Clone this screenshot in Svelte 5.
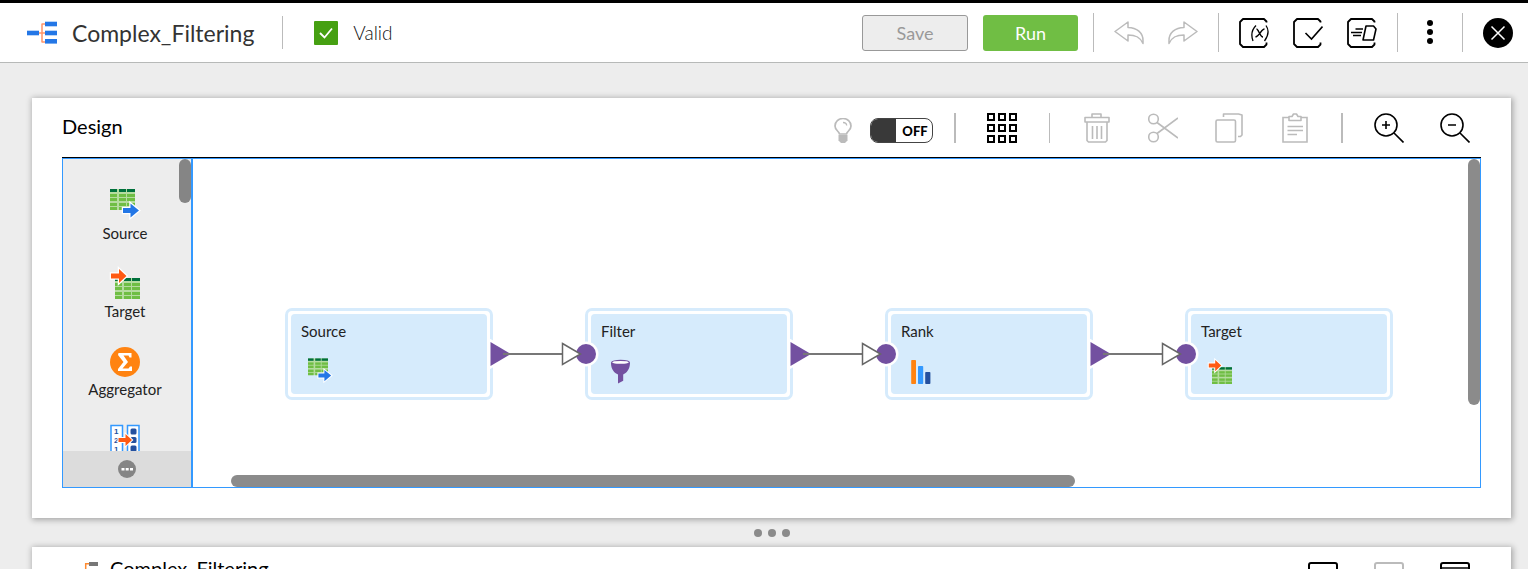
<script>
  const palette = [
    { name: 'Source', icon: 'source' },
    { name: 'Target', icon: 'target' },
    { name: 'Aggregator', icon: 'aggregator' },
    { name: '', icon: 'mapping' }
  ];
  const nodes = [
    { name: 'Source', icon: 'source', x: 92 },
    { name: 'Filter', icon: 'filter', x: 392 },
    { name: 'Rank', icon: 'rank', x: 692 },
    { name: 'Target', icon: 'target', x: 992 }
  ];
  const nodeY = 149;
  let hints = $state(false);
</script>

{#snippet table(x, y)}
  <g transform="translate({x} {y})">
    <rect width="25" height="21" fill="#b5dc9f" />
    {#each [0, 9, 17] as cx}
      <rect x={cx} y="0" width={cx === 17 ? 8 : 7} height="3" fill="#00703c" />
      {#each [5, 9, 14, 18] as ry}
        <rect x={cx} y={ry} width={cx === 17 ? 8 : 7} height="3" fill="#6fbe44" />
      {/each}
    {/each}
  </g>
{/snippet}

{#snippet glyph(kind)}
  {#if kind === 'source'}
    {@render table(0, -2)}
    <path d="M13 17h7.500v-4.500l8.500 7-8.500 7V22H13z" fill="#2477e6" stroke="#fff" stroke-width="2.500" paint-order="stroke" />
  {:else if kind === 'target'}
    {@render table(5, 9)}
    <path d="M1 4.500h8V0l7.500 7L9 14V9.500H1z" fill="#ff5a13" stroke="#fff" stroke-width="2.500" paint-order="stroke" />
  {:else if kind === 'aggregator'}
    <circle cx="15" cy="15" r="15" fill="#ff8311" />
    <path d="M8.500 6h13v4.500h-2l-1-2h-5L18 15l-5.500 6.500h6l1.500-2h2V24h-14v-2l5.500-7-5.500-7z" fill="#fff" />
  {:else if kind === 'mapping'}
    <path d="M1 .5h11.500v32H1zM17.500 .5h11.500v32H17.500z" fill="#fff" stroke="#3399ff" stroke-width="1.500" />
    <g fill="#24509f">
      <rect x="20.500" y="3.500" width="6" height="6" rx="1.500" />
      <rect x="20.500" y="12" width="6" height="6" rx="1.500" />
      <rect x="20.500" y="20.500" width="6" height="6" rx="1.500" />
    </g>
    <g fill="#24509f" font-size="8" font-weight="700" font-family="Liberation Sans, sans-serif">
      <text x="4" y="9">1</text><text x="4" y="18">2</text><text x="4" y="27">1</text>
    </g>
    <path d="M8.500 13h7V9l6.500 6-6.500 6V17h-7z" fill="#ff5a13" stroke="#fff" stroke-width="2" paint-order="stroke" />
  {:else if kind === 'filter'}
    <path d="M3.700 3C3.700 12 8 16 12.500 18v11.500L19 26v-8c4-2 8.500-6 8.500-15z" fill="#7350a0" />
    <ellipse cx="15.600" cy="3" rx="11" ry="2.500" fill="#fff" stroke="#7350a0" stroke-width="1.500" />
  {:else if kind === 'rank'}
    <rect x="4" y="0" width="6" height="30" rx="1" fill="#ff8311" />
    <rect x="12.500" y="7.500" width="6.500" height="22.500" rx="1" fill="#3399ff" />
    <rect x="21.500" y="15" width="6.500" height="15" rx="1" fill="#24509f" />
  {/if}
{/snippet}

<div class="app">
  <header class="topbar">
    <svg class="logo" width="30" height="24" viewBox="0 0 30 24" aria-hidden="true">
      <path d="M12 12h6M15 3v18M14.500 3H18M14.500 21H18" stroke="#ff9468" stroke-width="1.500" fill="none" />
      <g fill="#2477e6"><rect y="9.700" width="12" height="4.600" /><rect x="18" y=".7" width="12" height="4.600" /><rect x="18" y="9.700" width="12" height="4.600" /><rect x="18" y="18" width="12" height="4.600" /></g>
    </svg>
    <h1>Complex_Filtering</h1>
    <span class="sep short"></span>
    <div class="status">
      <svg width="24" height="24" viewBox="0 0 24 24" aria-hidden="true"><rect width="24" height="24" rx="1" fill="#46a012" /><path d="M6 12l4.500 4.500L18 7.500" fill="none" stroke="#fff" stroke-width="1.800" /></svg>
      <span>Valid</span>
    </div>
    <div class="actions">
      <button class="btn save" disabled>Save</button>
      <button class="btn run">Run</button>
      <span class="sep"></span>
    </div>
    <div class="tools">
      <button aria-label="Undo"><svg width="30" height="24" viewBox="0 0 30 24"><path d="M14 1L1 10.500 14 20v-6c7 0 12 1.500 15 8.500v-3C29 12 23 6.500 14 6.500z" fill="none" stroke="#bbb" stroke-width="1.500" stroke-linejoin="round" /></svg></button>
      <button aria-label="Redo"><svg width="30" height="24" viewBox="0 0 30 24"><path d="M16 1l13 9.500L16 20v-6c-7 0-12 1.500-15 8.500v-3C1 12 7 6.500 16 6.500z" fill="none" stroke="#bbb" stroke-width="1.500" stroke-linejoin="round" /></svg></button>
    </div>
    <span class="sep"></span>
    <div class="tools">
      <button aria-label="Parameters"><svg width="30" height="30" viewBox="0 0 30 30" fill="none" stroke="#000"><path d="M27.500 4.500V3.500L25 1H4L1 4v22l3 3h21l2.500-2.500v-2" stroke-width="1.800" stroke-linejoin="round" /><path d="M17 7.500c-5 5-5 10-3 15.500M27 7.500c3.500 5 2.500 10-1.500 15.500M17.500 11c2 0 3.500 8 6.500 8M25.500 11c-3 0-5 7-9 8" stroke-width="1.300" /></svg></button>
      <button aria-label="Validate"><svg width="30" height="30" viewBox="0 0 30 30" fill="none" stroke="#000"><path d="M27.500 4.500V3.500L25 1H4L1 4v22l3 3h21l2.500-2.500v-2" stroke-width="1.800" stroke-linejoin="round" /><path d="M12.500 15l6 6L29.500 8.500" stroke-width="1.600" /></svg></button>
      <button aria-label="Preview data"><svg width="30" height="30" viewBox="0 0 30 30" fill="none" stroke="#000"><path d="M27.500 4.500V3.500L25 1H4L1 4v22l3 3h21l2.500-2.500v-2" stroke-width="1.800" stroke-linejoin="round" /><path d="M19 8h7.500l2.500 3-2.500 11H16z" stroke-width="1.600" stroke-linejoin="round" /><path d="M8.500 11H16M4 14.500h11M6 17.500h8" stroke-width="1.500" /></svg></button>
    </div>
    <span class="sep"></span>
    <button aria-label="More actions"><svg width="24" height="30" viewBox="0 0 24 30"><circle cx="12" cy="5" r="3" /><circle cx="12" cy="14" r="3" /><circle cx="12" cy="23" r="3" /></svg></button>
    <span class="sep"></span>
    <button aria-label="Close"><svg width="30" height="30" viewBox="0 0 30 30"><circle cx="15" cy="15" r="15" /><path d="M8.500 8.500l13 13M21.500 8.500l-13 13" stroke="#fff" stroke-width="1.500" /></svg></button>
  </header>

  <main>
    <section class="card design">
      <div class="card-head">
        <h2>Design</h2>
        <div class="group hint">
          <svg width="18" height="26" viewBox="0 0 18 26" aria-hidden="true"><path d="M5.500 16C5 13 1 12.500 1 8a8 7.500 0 0 1 16 0c0 4.500-4 5-4.500 8z" fill="none" stroke="#bbb" stroke-width="1.700" /><path d="M9 4.500c2 0 3.500 1 3.700 3" fill="none" stroke="#bbb" stroke-width="1.300" /><path d="M4.500 17h9v5.500L11 25H7l-2.500-2.500z" fill="#bbb" /></svg>
          <label class="switch">
            <input type="checkbox" bind:checked={hints} aria-label="Recommendations" />
            <span class="knob"></span><span class="state">{hints ? 'ON' : 'OFF'}</span>
          </label>
        </div>
        <span class="bar wide first"></span>
        <div class="group">
          <button aria-label="Layout"><svg width="30" height="30" viewBox="0 0 30 30" fill="none" stroke="#000" stroke-width="2">{#each [1, 12, 23] as gy}{#each [1, 12, 23] as gx}<rect x={gx} y={gy} width="6" height="6" />{/each}{/each}</svg></button>
        </div>
        <span class="bar"></span>
        <div class="group">
          <button aria-label="Delete"><svg width="30" height="30" viewBox="0 0 30 30" fill="none" stroke="#bbb" stroke-width="1.600"><path d="M10 4V1h9v3M3 4.500h24V9H3zM5 9v18.500L6.500 29h17l1.500-1.500V9M10.500 13v13M15 13v13M19.500 13v13" stroke-linejoin="round" /></svg></button>
          <button aria-label="Cut"><svg width="30" height="30" viewBox="0 0 30 30" fill="none" stroke="#bbb" stroke-width="1.600"><circle cx="5.500" cy="6" r="4.800" /><circle cx="5.500" cy="24" r="4.800" /><path d="M9 9.500l21 15.500M9 20.500L30 5" /></svg></button>
          <button aria-label="Copy"><svg width="30" height="30" viewBox="0 0 30 30" fill="none" stroke="#bbb" stroke-width="1.600"><rect x="2" y="7" width="19.500" height="22" rx="1.500" /><path d="M9.500 4V1h15L28 2v20l-1.500 1.500H24" stroke-linejoin="round" /></svg></button>
          <button aria-label="Paste"><svg width="30" height="30" viewBox="0 0 30 30" fill="none" stroke="#bbb" stroke-width="1.600"><path d="M9 4.500H3V29h24V4.500h-6" /><path d="M9 3.500h3L13.500 1h3L18 3.500h3v4H9z" stroke-linejoin="round" /><path d="M7.500 13.500H23M7.500 17.500H23M7.500 21.500H17" /></svg></button>
        </div>
        <span class="bar wide"></span>
        <div class="group">
          <button aria-label="Zoom in"><svg width="30" height="30" viewBox="0 0 30 30" fill="none" stroke="#000" stroke-width="1.600"><circle cx="12" cy="12" r="11" /><path d="M20 20l9.500 9.500M8 12h8M12 8v8" /></svg></button>
          <button aria-label="Zoom out"><svg width="30" height="30" viewBox="0 0 30 30" fill="none" stroke="#000" stroke-width="1.600"><circle cx="12" cy="12" r="11" /><path d="M20 20l9.500 9.500M8 12h8" /></svg></button>
        </div>
      </div>

      <div class="workspace">
        <aside class="palette">
          <ul>
            {#each palette as item}
              <li>
                <svg width="30" height="30" viewBox="0 0 30 30" aria-hidden="true">{@render glyph(item.icon)}</svg>
                <span>{item.name}</span>
              </li>
            {/each}
          </ul>
          <div class="thumb palette-thumb"></div>
          <button class="more" aria-label="More transformations"><svg width="18" height="18" viewBox="0 0 18 18"><circle cx="9" cy="9" r="9" fill="#858585" /><path d="M3.500 8h3v2.500h-3zM7.700 8h3v2.500h-3zM12 8h3v2.500h-3z" fill="#fff" /></svg></button>
        </aside>

        <div class="canvas">
          {#each nodes as node}
            <div class="node" style="left: {node.x}px; top: {nodeY}px">
              <div class="face">
                <span>{node.name}</span>
                <svg width="24" height="24" viewBox="0 0 30 30" aria-hidden="true">{@render glyph(node.icon)}</svg>
              </div>
            </div>
          {/each}
          <svg class="edges" aria-hidden="true">
            {#each nodes.slice(1) as node}
              <g transform="translate({node.x} {nodeY + 46})">
                <path d="M-94.500-12l20.500 12-20.500 12z" fill="#fff" stroke="#fff" stroke-width="5" />
                <circle cx="1" cy="0" r="12.500" fill="#fff" />
                <path d="M-94.500-12l20.500 12-20.500 12z" fill="#7350a0" />
                <circle cx="1" cy="0" r="10" fill="#7350a0" />
                <path d="M-82 0h60" stroke="#777" stroke-width="2" />
                <path d="M-22.500-10.500l18 10.500-18 10.500z" fill="#fff" stroke="#666" stroke-width="1.500" />
              </g>
            {/each}
          </svg>
          <div class="thumb vertical"></div>
          <div class="thumb horizontal"></div>
        </div>
      </div>
    </section>

    <div class="splitter"><i></i><i></i><i></i></div>

    <section class="card details">
      <svg class="mini" width="22" height="18" viewBox="0 0 22 18" aria-hidden="true"><path d="M3 9h9M8.700 16V1.700h3.500M9 16h3" stroke="#ff8a30" stroke-width="1.500" fill="none" /><g fill="#777"><rect y="7" width="7" height="4" /><rect x="12" y="0" width="9" height="4" /><rect x="12" y="7" width="9" height="4" /><rect x="12" y="14" width="9" height="4" /></g></svg>
      <h2>Complex_Filtering</h2>
      <div class="group">
        <button aria-label="Restore panel"><svg width="30" height="30" viewBox="0 0 30 30" fill="none" stroke="#000" stroke-width="2"><rect x="1" y="1" width="28" height="28" rx="2" /></svg></button>
        <button aria-label="Split panel"><svg width="30" height="30" viewBox="0 0 30 30" fill="none" stroke="#bbb" stroke-width="2"><rect x="1" y="1" width="28" height="28" rx="2" /></svg></button>
        <button aria-label="Maximize panel"><svg width="30" height="30" viewBox="0 0 30 30" fill="none" stroke="#000" stroke-width="2"><rect x="1" y="1" width="28" height="28" rx="2" /><path d="M1 6h28" stroke-width="1.500" /></svg></button>
      </div>
    </section>
  </main>
</div>

<style>
  :global(body) { background: #ededed; }
  .app, .app * { box-sizing: border-box; }
  .app {
    display: flex;
    flex-direction: column;
    height: 100vh;
    overflow: hidden;
    border-top: 3px solid #000;
    font-family: Lato, "Liberation Sans", sans-serif;
    color: #000;
  }
  svg { display: block; flex: none; }
  button { padding: 0; border: 0; background: none; font: inherit; cursor: pointer; }
  h1, h2 { margin: 0; }
  .topbar {
    display: flex;
    align-items: center;
    gap: 20px;
    flex: none;
    height: 60px;
    padding: 0 15px 0 27px;
    background: #fff;
    border-bottom: 1px solid #b7b9b8;
  }
  h1 { margin-left: -5px; font-size: 23px; line-height: 30px; font-weight: 400; color: #333; }
  .sep { width: 1px; height: 39px; background: #bbb; }
  .short { height: 33px; margin: 0 11px 0 8px; }
  .status { display: flex; align-items: center; gap: 15px; font-size: 19px; font-weight: 300; color: #111; }
  .actions { display: flex; align-items: center; gap: 15px; margin-left: auto; }
  .tools { display: flex; align-items: center; gap: 24px; }
  .btn { height: 36px; border-radius: 3px; font-size: 18px; }
  .save { width: 106px; border: 1px solid #999; background: #ededed; color: #999; }
  .run { width: 95px; background: #70be44; color: #fff; }

  main { flex: 1; display: flex; flex-direction: column; min-height: 0; padding: 35px 17px 0 32px; }
  .card { background: #fff; box-shadow: 1px 1px 6px 1px rgba(0, 0, 0, 0.3); }
  .design { flex: none; padding: 0 30px 30px; }
  .card-head { display: flex; align-items: center; height: 60px; padding-right: 11px; border-bottom: 1px solid #000; }
  h2 { margin-right: auto; padding-bottom: 4px; font-size: 20px; line-height: 28px; font-weight: 400; }
  .group { display: flex; align-items: center; gap: 36px; }
  .hint { gap: 18px; padding-top: 6px; }
  .bar { width: 1px; height: 30px; margin: 0 32px; background: #bbb; }
  .wide { width: 2px; margin: 0 31px; }
  .first { margin-left: 21px; }
  .switch {
    position: relative;
    display: flex;
    align-items: center;
    width: 63px;
    height: 25px;
    border: 1px solid #444;
    border-radius: 8px;
    overflow: hidden;
    font-size: 13px;
    font-weight: 900;
  }
  .switch input { position: absolute; inset: 0; margin: 0; opacity: 0; }
  .knob { width: 25px; height: 25px; background: #393939; }
  .state { flex: 1; padding-left: 2px; text-align: center; }

  .workspace { display: flex; height: 330px; border: 1px solid #39f; }
  .palette { position: relative; display: flex; flex-direction: column; width: 130px; flex: none; border-right: 2px solid #39f; background: #ededed; }
  .palette ul { flex: 1; min-height: 0; margin: 0; padding: 32px 4px 0 0; list-style: none; overflow: hidden; }
  .palette li { display: flex; flex-direction: column; align-items: center; gap: 3px; height: 78px; font-size: 15px; line-height: 18px; color: #222; }
  .palette svg, .node svg { overflow: visible; }
  .more { display: flex; align-items: center; justify-content: center; height: 36px; background: #dcdcdc; }
  .thumb { position: absolute; border-radius: 6px; background: #8b8b8b; }
  .palette-thumb { top: 0; right: 0; width: 12px; height: 44px; background: #858585; }
  .canvas { position: relative; flex: 1; overflow: hidden; background: #fff; }
  .vertical { top: 0; right: 0; width: 12px; height: 75%; }
  .horizontal { left: 38px; bottom: 0; width: 844px; height: 12px; }
  .node { position: absolute; width: 208px; height: 92px; padding: 3px; border: 3px solid #d6ebfc; border-radius: 7px; background: #fff; }
  .face { display: flex; flex-direction: column; gap: 20px; height: 100%; padding: 8px 10px; border-radius: 4px; background: #d6ebfc; font-size: 15px; line-height: 18px; color: #222; }
  .face svg { margin-left: 7px; }
  .edges { position: absolute; inset: 0; width: 100%; height: 100%; }

  .splitter { display: flex; align-items: center; justify-content: center; gap: 6px; flex: none; height: 29px; }
  .splitter i { width: 8px; height: 8px; border-radius: 50%; background: #8b8b8b; }
  .details { display: flex; align-items: flex-start; flex: none; height: 200px; padding: 15px 41px 0 45px; }
  .details h2 { margin-top: -8px; margin-left: 11px; }
</style>
